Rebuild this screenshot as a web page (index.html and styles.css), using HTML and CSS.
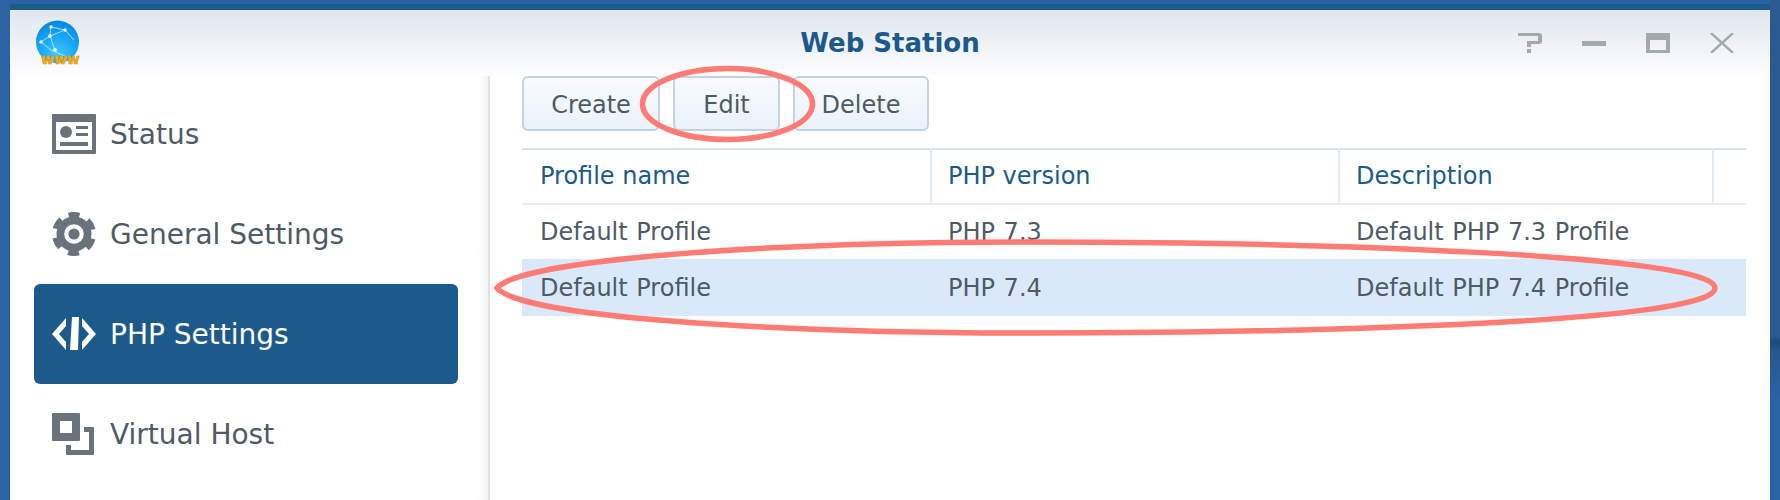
FILE: index.html
```html
<!DOCTYPE html>
<html lang="en">
<head>
<meta charset="utf-8">
<title>Web Station</title>
<link rel="stylesheet" href="styles.css">
</head>
<body>
<div class="desktop">
  <div class="window">
    <header class="titlebar">
      <svg class="app-logo" width="50" height="50" viewBox="0 0 50 50">
        <defs>
          <radialGradient id="globe" cx="0.5" cy="0.8" r="0.85">
            <stop offset="0" stop-color="#3fc9ff"/>
            <stop offset="0.65" stop-color="#0f9ef5"/>
            <stop offset="1" stop-color="#0a80da"/>
          </radialGradient>
        </defs>
        <circle cx="22.5" cy="25" r="21.5" fill="url(#globe)"/>
        <path d="M16 10l14 3 9 10M16 10l-1 9-9 6 10 8 14 6M15 19l15-6M15 19l5 14" fill="none" stroke="#cfeeff" stroke-width="0.8"/>
        <g fill="#e8f8ff"><circle cx="16" cy="10" r="1.7"/><circle cx="30" cy="13" r="1.7"/><circle cx="15" cy="19" r="1.9"/><circle cx="6" cy="25" r="1.7"/><circle cx="20" cy="33" r="1.9"/></g>
        <text class="logo-text" x="6" y="47">www</text>
      </svg>
      <h1 class="title">Web Station</h1>
      <div class="controls">
        <svg width="24" height="20" viewBox="0 0 24 20"><path d="M0 0h21q3 0 3 3v5q0 3-3 3h-8v3H9V8h11V3H0zM9 16h4v4H9z" fill="#a4a9ae"/></svg>
        <svg width="24" height="5" viewBox="0 0 24 5"><rect width="24" height="5" fill="#a4a9ae"/></svg>
        <svg width="24" height="20" viewBox="0 0 24 20"><path d="M0 0h24v20H0zM4 7v10h16V7z" fill="#a4a9ae" fill-rule="evenodd"/></svg>
        <svg width="24" height="20" viewBox="0 0 24 20"><path d="M1 0l22 20M23 0L1 20" stroke="#a4a9ae" stroke-width="2.4" fill="none"/></svg>
      </div>
    </header>
    <div class="body">
      <nav class="sidebar">
        <a class="nav-item">
          <svg class="nav-icon" width="44" height="40" viewBox="0 0 44 40"><path fill="#6a737c" fill-rule="evenodd" d="M1 0h42q1 0 1 1v38q0 1-1 1H1q-1 0-1-1V1q0-1 1-1zM4 8v28h36V8z"/><circle cx="14" cy="18" r="6" fill="#6a737c"/><path fill="#6a737c" d="M24 12h12v3H24zM24 19h12v3H24zM8 28h28v4H8z"/></svg>
          <span>Status</span>
        </a>
        <a class="nav-item">
          <svg class="nav-icon" width="44" height="44" viewBox="0 0 44 44"><circle cx="22" cy="22" r="17.5" fill="#6a737c"/><circle cx="22" cy="22" r="19.5" fill="none" stroke="#6a737c" stroke-width="5" stroke-dasharray="11 9.42" transform="rotate(-106 22 22)"/><circle cx="22" cy="22" r="7.7" fill="none" stroke="#fff" stroke-width="4.2"/></svg>
          <span>General Settings</span>
        </a>
        <a class="nav-item active">
          <svg class="nav-icon" width="44" height="34" viewBox="0 0 44 34"><path fill="#fff" d="M14 1v8L7 17l7 8v8L0 17zM30 1v8l7 8-7 8v8l14-16zM20 0h7l-1 33h-8z"/></svg>
          <span>PHP Settings</span>
        </a>
        <a class="nav-item">
          <svg class="nav-icon" width="44" height="42" viewBox="0 0 44 42"><path fill="#6a737c" fill-rule="evenodd" d="M1 0h26q1 0 1 1v26q0 1-1 1H1q-1 0-1-1V1q0-1 1-1zM8 8v12h12V8z"/><path fill="#6a737c" d="M32 14h9q1 0 1 1v26q0 1-1 1H15q-1 0-1-1v-9h5v5h18V19h-5z"/></svg>
          <span>Virtual Host</span>
        </a>
      </nav>
      <main class="content">
        <div class="toolbar">
          <button class="btn btn-create">Create</button>
          <button class="btn btn-edit">Edit</button>
          <button class="btn btn-delete">Delete</button>
        </div>
        <table class="grid">
          <colgroup><col class="c1"><col class="c2"><col class="c3"><col></colgroup>
          <thead>
            <tr><th>Profile name</th><th>PHP version</th><th>Description</th><th></th></tr>
          </thead>
          <tbody>
            <tr><td>Default Profile</td><td>PHP 7.3</td><td colspan="2">Default PHP 7.3 Profile</td></tr>
            <tr class="selected"><td>Default Profile</td><td>PHP 7.4</td><td colspan="2">Default PHP 7.4 Profile</td></tr>
          </tbody>
        </table>
      </main>
    </div>
  </div>
  <svg class="annotations" width="1780" height="500" viewBox="0 0 1780 500">
    <ellipse cx="727.5" cy="104" rx="85" ry="35.5" fill="none" stroke="#ff7b74" stroke-width="5.5"/>
    <path d="M497 288C520 260 760 242 1030 242C1320 242 1715 255 1715 288C1715 322 1320 333 1030 333C760 333 520 316 497 288Z" fill="none" stroke="#ff7b74" stroke-width="5.5"/>
  </svg>
</div>
</body>
</html>
```

FILE: styles.css
```css
* { box-sizing: border-box; }
html, body { margin: 0; padding: 0; }
body {
  width: 1780px;
  height: 500px;
  overflow: hidden;
  font-family: "DejaVu Sans", Verdana, sans-serif;
}
.desktop {
  position: relative;
  width: 1780px;
  height: 500px;
  padding: 10px 10px 0;
  background:
    linear-gradient(#2b5a90 0, #2b5a90 336px, #1f4a7a 342px, #27588f 352px, #2a64a4 400px) right top / 10px 100% no-repeat,
    #2a62a2;
}
.window {
  height: 490px;
  background: #fff;
  box-shadow: 0 -6px 0 #1d5a8c;
  display: flex;
  flex-direction: column;
}
.titlebar {
  height: 66px;
  flex: none;
  display: grid;
  grid-template-columns: 1fr auto 1fr;
  align-items: center;
  background: linear-gradient(#e0e6ee, #fdfeff);
}
.app-logo { margin: -3px 0 0 25px; }
.logo-text {
  font-family: "DejaVu Sans", sans-serif;
  font-size: 14px;
  font-weight: 700;
  fill: #f8ac12;
  stroke: #e08c00;
  stroke-width: 0.5px;
}
.title {
  margin: 0;
  font-size: 26px;
  font-weight: 700;
  color: #1c5a8c;
}
.controls {
  justify-self: end;
  display: flex;
  align-items: center;
  gap: 40px;
  padding-right: 36px;
}
.body { flex: 1; display: flex; min-height: 0; }
.sidebar {
  width: 480px;
  flex: none;
  padding: 8px 30px 0 24px;
  border-right: 2px solid #e0e1e3;
  background: linear-gradient(to right, #fff calc(100% - 10px), #f3f3f4);
}
.nav-item {
  height: 100px;
  display: flex;
  align-items: center;
  padding-left: 18px;
  border-radius: 6px;
  font-size: 28px;
  color: #4f5a65;
}
.nav-icon { flex: none; margin-right: 14px; }
.nav-item.active { background: #1d5a8c; color: #fff; }
.content { flex: 1; padding: 0 24px 0 32px; min-width: 0; }
.toolbar { display: flex; gap: 13px; height: 55px; margin-bottom: 17px; }
.btn {
  height: 55px;
  padding: 2px 0 0;
  border: 2px solid #c5d3df;
  border-radius: 6px;
  background: linear-gradient(#f8fbfe, #eaf2fa);
  font: 24px "DejaVu Sans", Verdana, sans-serif;
  color: #4f5a65;
}
.btn-create { width: 138px; }
.btn-edit { width: 107px; }
.btn-delete { width: 136px; }
.grid {
  width: 100%;
  border-collapse: collapse;
  table-layout: fixed;
  font-size: 24px;
}
.c1 { width: 409px; }
.c2 { width: 408px; }
.c3 { width: 374px; }
.grid th {
  height: 55px;
  padding: 0 0 2px 16px;
  text-align: left;
  font-weight: 400;
  color: #1c5a8c;
  border-top: 2px solid #d8e3ed;
  border-bottom: 2px solid #e8eef4;
  border-right: 2px solid #e2ebf3;
}
.grid th:first-child, .grid td:first-child { padding-left: 18px; }
.grid th:last-child { border-right: 0; }
.grid td {
  height: 55px;
  padding: 0 0 0 17px;
  color: #4f5a65;
  word-spacing: 1px;
}
.selected td { height: 57px; background: #d9e9f9; }
.annotations {
  position: absolute;
  left: 0;
  top: 0;
  pointer-events: none;
}
```
